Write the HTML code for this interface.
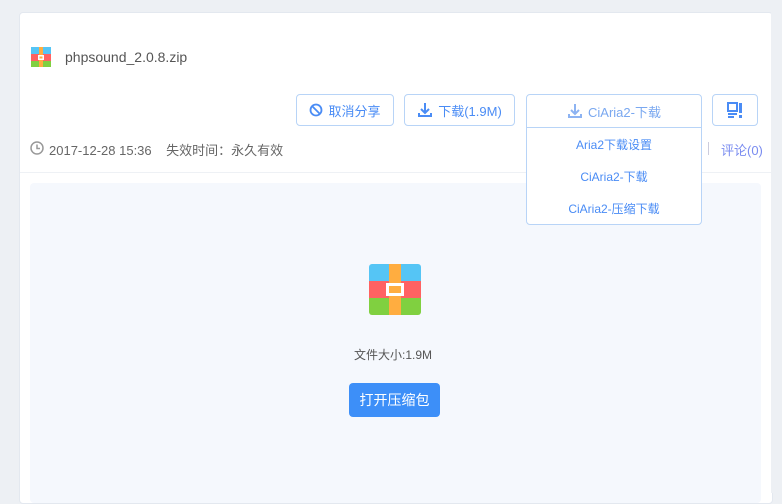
<!DOCTYPE html><html><head><meta charset="utf-8"><style>
body{margin:0;width:782px;height:493px;background:#edf0f4;font-family:"Liberation Sans","Noto Sans CJK SC",sans-serif;position:relative;overflow:hidden}
.card{position:absolute;left:19px;top:12px;width:752px;height:490px;background:#fff;border:1px solid #e3e8ef;border-radius:4px}
.a{position:absolute}
.btn{position:absolute;top:94px;height:32px;border:1px solid #b8d4f7;border-radius:4px;background:#fff;color:#4a8cf5;font-size:13px;display:flex;align-items:center;justify-content:center;box-sizing:border-box;z-index:5}
.dd{position:absolute;z-index:6;left:526px;top:127px;width:176px;height:98px;border:1px solid #b8d4f7;border-radius:0 0 4px 4px;background:#fff;box-sizing:border-box;color:#4a8cf5;font-size:12px;text-align:center;padding-top:1px}
.dd div{height:32px;line-height:32px}
</style></head><body>
<div class="card"></div>
<div class="a" style="left:771px;top:0;width:11px;height:493px;background:#edf0f4"></div>
<svg class="a" style="left:31px;top:47px" width="20" height="20"><rect width="20" height="7" fill="#55c5f5"/><rect y="7" width="20" height="7" fill="#ff6262"/><rect y="14" width="20" height="6" fill="#80d040"/><rect x="8" width="4" height="20" fill="#ffad40"/><rect x="7" y="8" width="6" height="5" fill="#fff"/><rect x="8.5" y="9.5" width="3" height="2" fill="#ffad40"/></svg>
<div class="a" style="left:65px;top:49px;font-size:14px;color:#555">phpsound_2.0.8.zip</div>
<div class="btn" style="left:296px;width:98px"><svg width="14" height="14" style="margin-right:5px"><circle cx="7" cy="7" r="5.5" fill="none" stroke="#4a8cf5" stroke-width="1.8"/><path d="M3 3L11 11" stroke="#4a8cf5" stroke-width="1.8"/></svg>取消分享</div>
<div class="btn" style="left:404px;width:111px"><svg width="16" height="16" style="margin-right:5px"><path d="M8 1V11M4 7L8 11L12 7M2 11V14H14V11" fill="none" stroke="#4a8cf5" stroke-width="2"/></svg>下载(1.9M)</div>
<div class="btn" style="left:526px;width:176px;height:34px;border-radius:4px 4px 0 0;color:#7aa8f0"><svg width="16" height="16" style="margin-right:5px"><path d="M8 1V11M4 7L8 11L12 7M2 11V14H14V11" fill="none" stroke="#8db3f2" stroke-width="2"/></svg>CiAria2-下载</div>
<div class="dd"><div>Aria2下载设置</div><div>CiAria2-下载</div><div>CiAria2-压缩下载</div></div>
<div class="btn" style="left:712px;width:46px"><svg width="16" height="16"><rect x="1" y="1" width="9" height="8" fill="none" stroke="#4a8cf5" stroke-width="2"/><rect x="12" y="1" width="3" height="10" fill="#4a8cf5"/><rect x="1" y="11" width="9" height="2" fill="#4a8cf5"/><rect x="1" y="14" width="6" height="2" fill="#4a8cf5"/><rect x="12" y="13" width="3" height="3" fill="#4a8cf5"/></svg></div>
<svg class="a" style="left:30px;top:141px" width="14" height="14"><circle cx="7" cy="7" r="6" fill="none" stroke="#999" stroke-width="1.5"/><path d="M7 3.5V7.5H10" fill="none" stroke="#999" stroke-width="1.5"/></svg>
<div class="a" style="left:49px;top:140px;font-size:13px;color:#666">2017-12-28 15:36&nbsp;&nbsp;&nbsp;&nbsp;失效时间：永久有效</div>
<div class="a" style="left:708px;top:142px;width:1px;height:13px;background:#ccd"></div>
<div class="a" style="left:721px;top:140px;font-size:13px;color:#7a8cf0">评论(0)</div>
<div class="a" style="left:20px;top:172px;width:751px;height:1px;background:#eef1f5"></div>
<div class="a" style="left:30px;top:183px;width:731px;height:320px;background:#f5f8fd;border-radius:4px"></div>
<svg class="a" style="left:369px;top:264px" width="52" height="51"><clipPath id="c"><rect width="52" height="51" rx="3"/></clipPath><g clip-path="url(#c)"><rect width="52" height="17" fill="#55c5f5"/><rect y="17" width="52" height="17" fill="#ff6262"/><rect y="34" width="52" height="17" fill="#80d040"/><rect x="20" width="12" height="51" fill="#ffad40"/><rect x="17" y="19" width="18" height="13" fill="#fff"/><rect x="20" y="22" width="12" height="7" fill="#ffad40"/></g></svg>
<div class="a" style="left:354px;top:346px;font-size:12px;color:#555">文件大小:1.9M</div>
<div class="a" style="left:349px;top:383px;width:91px;height:34px;background:#3d8ff8;border-radius:4px;color:#fff;font-size:14px;line-height:34px;text-align:center">打开压缩包</div>
</body></html>
